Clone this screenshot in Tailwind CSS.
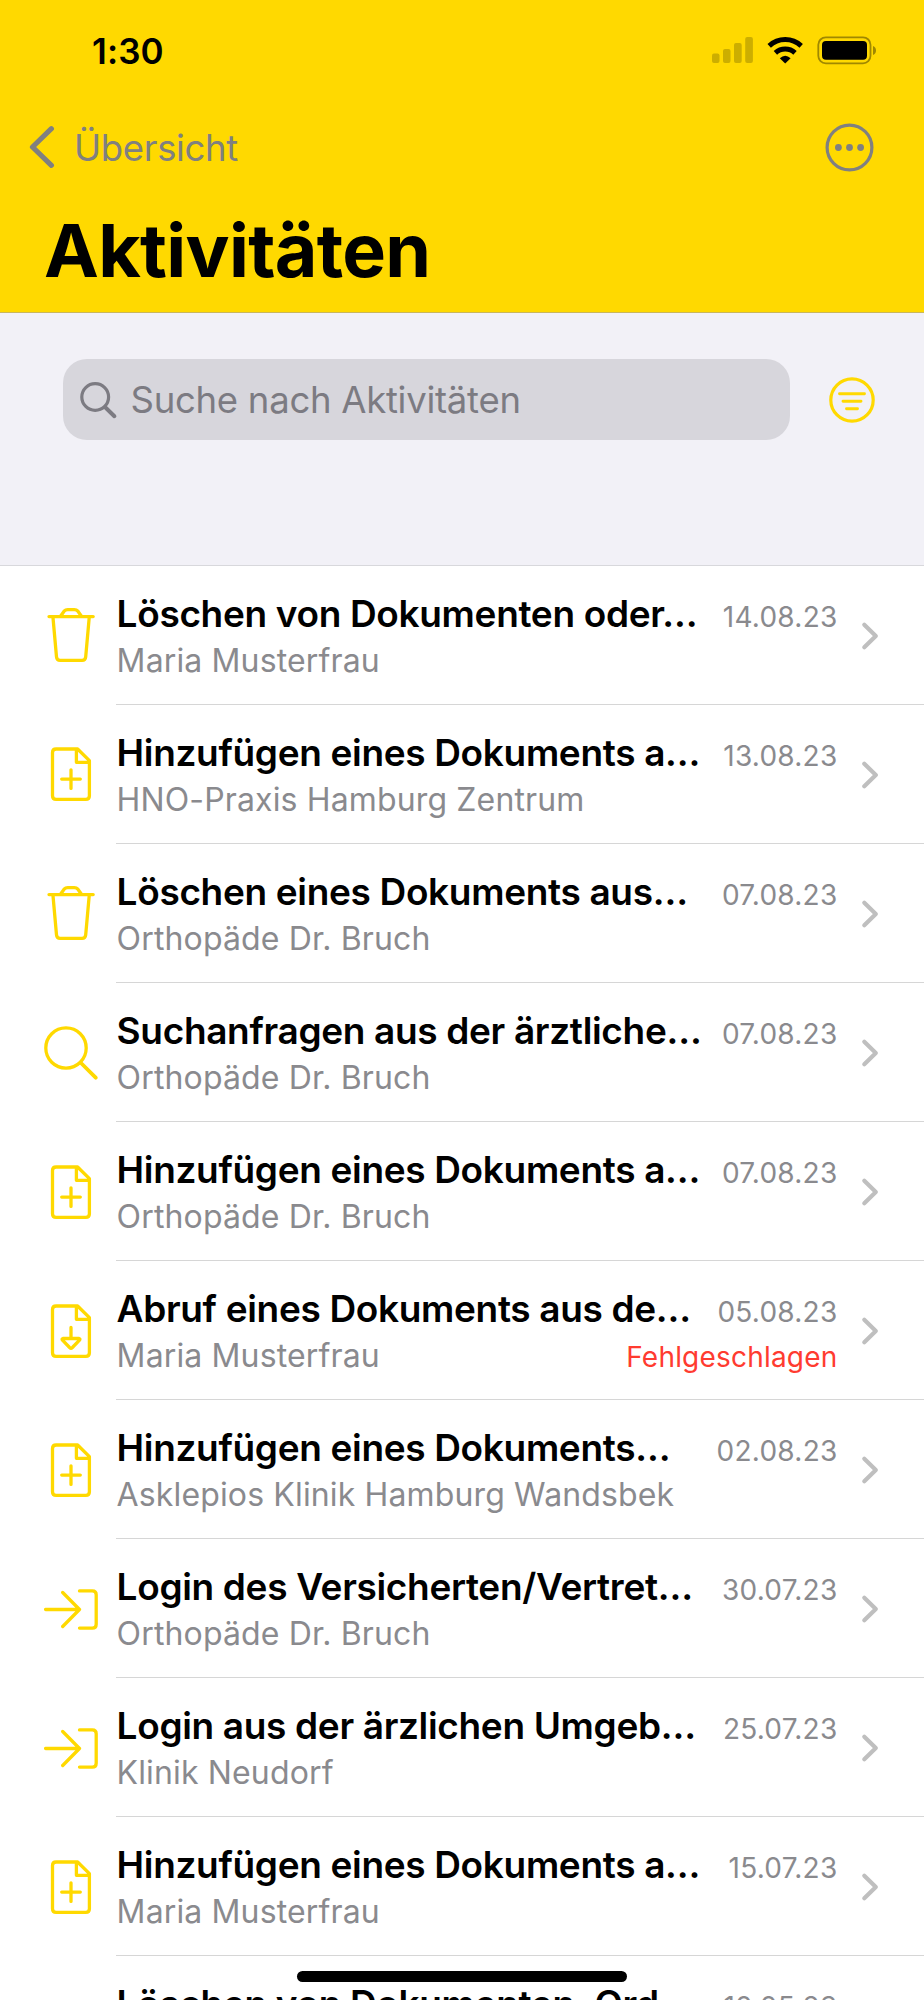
<!DOCTYPE html>
<html lang="de">
<head>
<meta charset="utf-8">
<title>Aktivitäten</title>
<script src="https://cdn.jsdelivr.net/npm/@tailwindcss/browser@4"></script>
</head>
<body class="bg-white">
<svg class="hidden">
  <symbol id="trash" viewBox="0 0 54 54"><path d="M5 8.6H49.2M16.5 8.2l3.6-5q1.4-1.5 3.6-1.5h6.6q2.2 0 3.6 1.5l3.6 5M8.9 8.6l3.6 40.2q.3 3.5 3.6 3.5h22q3.3 0 3.6-3.5L45.3 8.6"/></symbol>
  <symbol id="add" viewBox="0 0 54 54"><path d="M33.6 2H12.1q-3.6 0-3.6 3.6V48.7q0 3.6 3.6 3.6H41.8q3.6 0 3.6-3.6V13.6zM32.4 2V15.3H45.4M27 22.8V41.4M17.7 32.1H36.3"/></symbol>
  <symbol id="load" viewBox="0 0 54 54"><path d="M33.6 2H12.1q-3.6 0-3.6 3.6V48.7q0 3.6 3.6 3.6H41.8q3.6 0 3.6-3.6V13.6zM32.4 2V15.3H45.4M27 23.5V34.5M18.8 34.5H35.2q1.3.3.3 1.7L28.4 43.5q-1.4 1.3-2.8 0L18.5 36.2q-1-1.4.3-1.7z"/></symbol>
  <symbol id="search" viewBox="0 0 54 54"><circle cx="22" cy="22" r="20.2"/><path stroke-width="3.8" d="M37.5 37.5L51.7 51.7"/></symbol>
  <symbol id="login" viewBox="0 0 54 54"><path d="M1.6 27.5H35.5M18.7 10.5L35.5 27.5L18.7 44.5M35.5 8.9H48.3q3.9 0 3.9 3.9V42.2q0 3.9-3.9 3.9H35.5"/></symbol>
</svg>
<div class="relative flex h-[2000px] w-[924px] flex-col overflow-hidden bg-white font-['Inter',sans-serif]">
  <header class="flex h-[313px] shrink-0 flex-col border-b border-[#c9b65c] bg-[#ffd900]">
    <div class="flex h-[100px] items-center justify-between pr-[48px] pl-[92px]">
      <span class="pt-px text-[35px] leading-[44px] font-semibold tracking-[0.1px]">1:30</span>
      <svg class="h-[30px] w-[165px]" viewBox="711 35 165 30">
        <g fill="#ccae00"><rect x="712" y="53.5" width="7.5" height="9.5" rx="2"/><rect x="723" y="49" width="7.5" height="14" rx="2"/><rect x="734" y="43" width="7.7" height="20" rx="2"/><rect x="745.2" y="37" width="7.7" height="26" rx="2"/></g>
        <g fill="none" stroke="#000" stroke-width="5"><path d="M769.2 45.9A23.5 23.5 0 0 1 801.2 45.9"/><path d="M775.4 52.8A14.5 14.5 0 0 1 795 52.8"/></g>
        <path d="M779.8 58.2Q785.2 53.2 790.6 58.2L785.2 63.4z"/>
        <rect x="818.3" y="37.3" width="52.2" height="26" rx="7.5" fill="none" stroke="#a08800" stroke-width="1.8"/>
        <rect x="822" y="41" width="45" height="18.8" rx="4"/>
        <path d="M873 46q3 1.2 3 4.5t-3 4.5z" fill="#a08800"/>
      </svg>
    </div>
    <div class="flex h-[94px] items-center justify-between pr-[50px] pl-[27px]">
      <div class="flex items-center gap-[19px] text-[#808080]">
        <svg class="h-[44px] w-[28px]" viewBox="0 0 28 44" fill="none" stroke="currentColor" stroke-width="5.2" stroke-linecap="round" stroke-linejoin="round"><path d="M24.4 3.7L5.5 22L24.4 40.3"/></svg>
        <span class="pt-px text-[36.5px] leading-[44px] tracking-[-0.35px]">Übersicht</span>
      </div>
      <svg class="h-[49px] w-[49px]" viewBox="0 0 49 49" fill="#808080"><circle cx="24.5" cy="24.5" r="22.4" fill="none" stroke="#808080" stroke-width="3.2"/><circle cx="13.4" cy="24.5" r="3.4"/><circle cx="24.5" cy="24.5" r="3.4"/><circle cx="35.6" cy="24.5" r="3.4"/></svg>
    </div>
    <h1 class="pt-[13px] pl-[44px] text-[73.5px] leading-[88px] font-bold tracking-[-0.7px]">Aktivitäten</h1>
  </header>
  <section class="flex h-[253px] shrink-0 items-start border-b border-[#d8d8dc] bg-[#f2f1f7] pt-[46px] pl-[63px]">
    <div class="flex h-[81px] w-[727px] items-center rounded-[24px] bg-[#d7d6dc] pl-[16px] text-[#7c7b82]">
      <svg class="h-[40px] w-[40px]" viewBox="0 0 40 40" fill="none" stroke="currentColor" stroke-linecap="round"><circle cx="16.2" cy="17" r="13.4" stroke-width="3.2"/><path d="M26.2 27.3L35.4 36.2" stroke-width="4"/></svg>
      <span class="pt-px pl-[11.5px] text-[36.5px] leading-[44px] tracking-[-0.27px]">Suche nach Aktivitäten</span>
    </div>
    <svg class="mt-[18px] ml-[39px] h-[46px] w-[46px]" viewBox="0 0 46 46" fill="none" stroke="#ffd900" stroke-width="3.2" stroke-linecap="round"><circle cx="23" cy="23" r="21.2"/><path d="M10.5 16.7H35.5M14 24.2H32M17.5 31.7H28.5" stroke-width="2.9"/></svg>
  </section>
  <ul id="list" class="flex shrink-0 flex-col"></ul>
  <div class="absolute top-[1970.5px] left-[297px] h-[11.5px] w-[330px] rounded-full bg-black"></div>
</div>
<script>
const rows = [
  ['trash', 'Löschen von Dokumenten oder…', 'Maria Musterfrau', '14.08.23'],
  ['add', 'Hinzufügen eines Dokuments a…', 'HNO-Praxis Hamburg Zentrum', '13.08.23'],
  ['trash', 'Löschen eines Dokuments aus…', 'Orthopäde Dr. Bruch', '07.08.23'],
  ['search', 'Suchanfragen aus der ärztliche…', 'Orthopäde Dr. Bruch', '07.08.23'],
  ['add', 'Hinzufügen eines Dokuments a…', 'Orthopäde Dr. Bruch', '07.08.23'],
  ['load', 'Abruf eines Dokuments aus de…', 'Maria Musterfrau', '05.08.23', 'Fehlgeschlagen'],
  ['add', 'Hinzufügen eines Dokuments…', 'Asklepios Klinik Hamburg Wandsbek', '02.08.23'],
  ['login', 'Login des Versicherten/Vertret…', 'Orthopäde Dr. Bruch', '30.07.23'],
  ['login', 'Login aus der ärzlichen Umgeb…', 'Klinik Neudorf', '25.07.23'],
  ['add', 'Hinzufügen eines Dokuments a…', 'Maria Musterfrau', '15.07.23'],
  ['', 'Löschen von Dokumenten, Ord…', '', '10.05.23'],
];
document.getElementById('list').innerHTML = rows.map(([icon, title, who, date, status]) => `
  <li class="flex h-[139.05px] pl-[44px]">
    <svg class="mt-[42.4px] mr-[18px] h-[54px] w-[54px] shrink-0" fill="none" stroke="#ffd900" stroke-width="3.3" stroke-linecap="round" stroke-linejoin="round">${icon && `<use href="#${icon}"/>`}</svg>
    <div class="flex grow border-b border-[#d6d6d6] pt-[25.5px] pr-[45px]">
      <div class="grow pl-[0.6px]">
        <div class="flex items-baseline justify-between whitespace-nowrap">
          <span class="text-[37px] leading-[44px] font-semibold tracking-[-0.33px]">${title}</span>
          <span class="text-[28px] leading-[36px] tracking-[0.25px] text-[#8a8a8e]">${date}</span>
        </div>
        <div class="flex items-baseline justify-between pt-[5.5px] whitespace-nowrap">
          <span class="text-[32px] leading-[40px] tracking-[0.14px] text-[#8a8a8e]">${who}</span>
          <span class="text-[28px] leading-[36px] tracking-[0.2px] text-[#ff3b30]">${status || ''}</span>
        </div>
      </div>
      <svg class="mt-[29px] ml-[23.5px] h-[30px] w-[18px] shrink-0" viewBox="0 0 18 30" fill="none" stroke="#bfbfbf" stroke-width="4.2" stroke-linecap="round" stroke-linejoin="round"><path d="M3.3 3.8L14.8 15L3.3 26.2"/></svg>
    </div>
  </li>`).join('');
</script>
</body>
</html>
